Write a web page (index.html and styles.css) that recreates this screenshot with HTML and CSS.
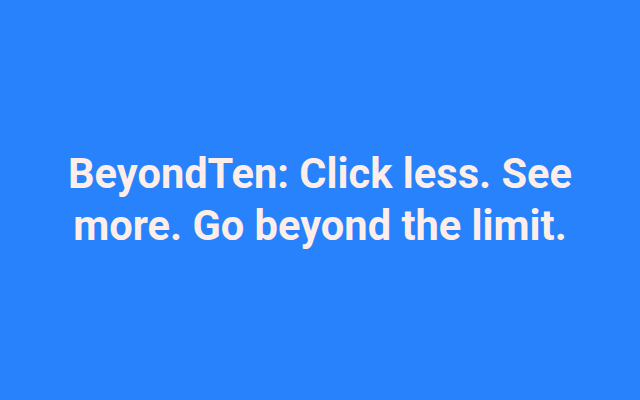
FILE: index.html
```html
<!DOCTYPE html>
<html lang="en">
<head>
    <meta charset="UTF-8">
    <title>BeyondTen</title>
    <link rel="stylesheet" href="styles.css">
</head>
<body>
    <div class="banner">
        <h1 class="tagline">BeyondTen: Click less. See more. Go beyond the limit.</h1>
    </div>
</body>
</html>
```

FILE: styles.css
```css
* {
    margin: 0;
    padding: 0;
}

body {
    background-color: #2782fb;
    font-family: Roboto, "Liberation Sans", sans-serif;
}

.banner {
    width: 640px;
    height: 400px;
    display: flex;
    align-items: center;
    justify-content: center;
}

.tagline {
    width: 540px;
    color: #fdeeea;
    font-size: 41.6px;
    font-weight: 700;
    line-height: 52px;
    text-align: center;
}
```
